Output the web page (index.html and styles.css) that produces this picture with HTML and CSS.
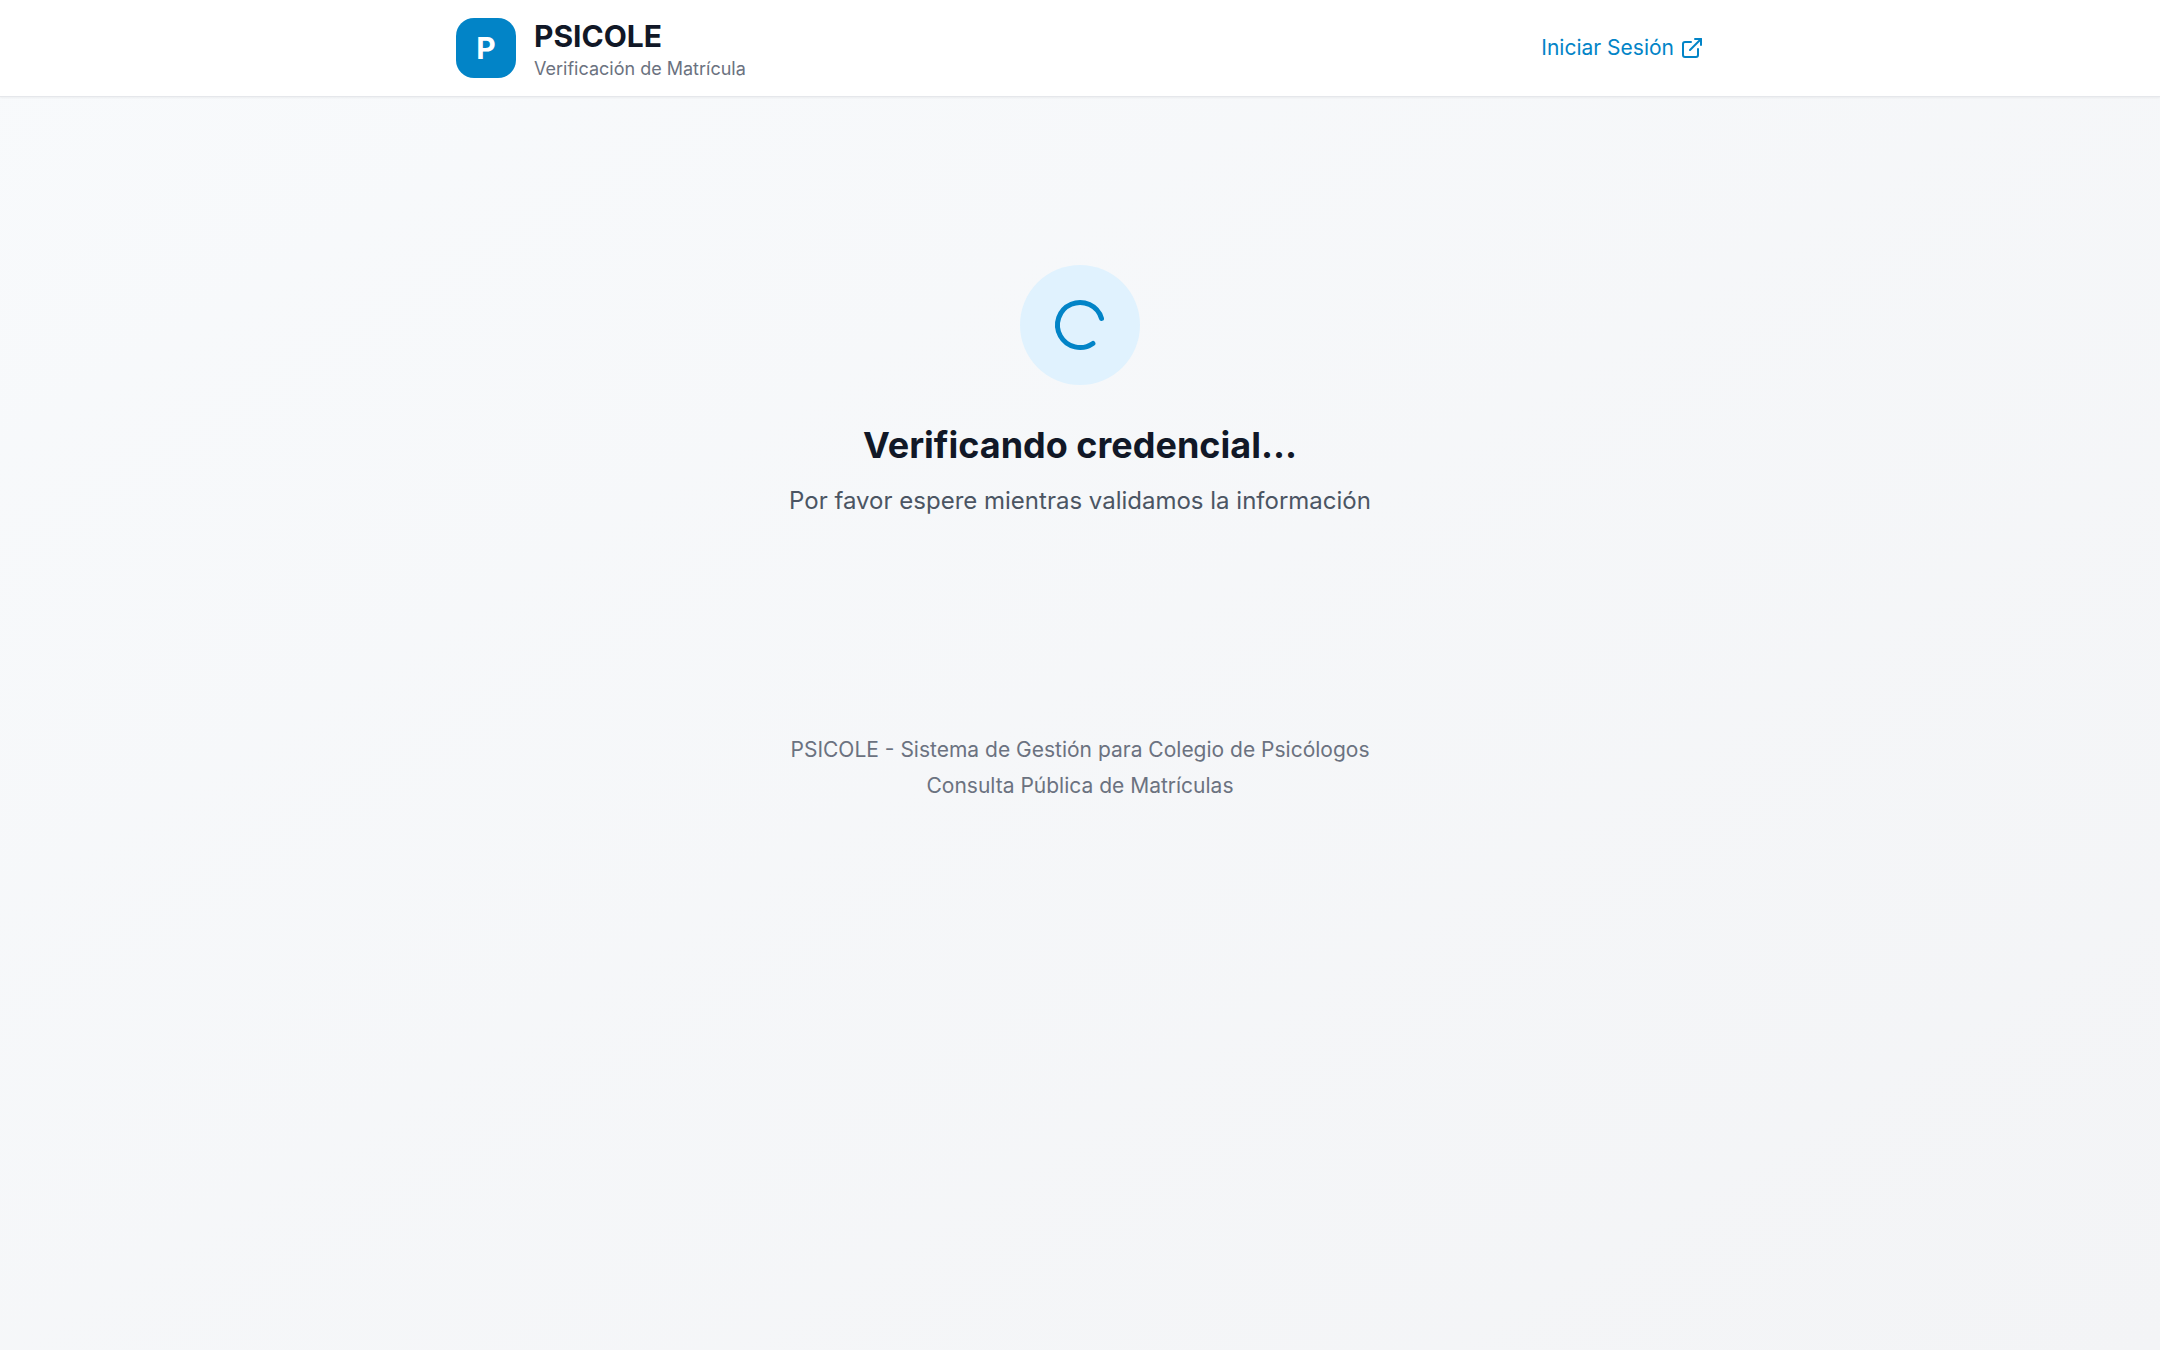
FILE: index.html
```html
<!DOCTYPE html>
<html lang="es">
<head>
  <meta charset="utf-8">
  <meta name="viewport" content="width=device-width, initial-scale=1">
  <title>PSICOLE - Verificación de Matrícula</title>
  <link rel="stylesheet" href="styles.css">
</head>
<body>
  <div class="page">
    <header class="header">
      <div class="container header-row">
        <div class="brand">
          <div class="brand-logo" aria-hidden="true">P</div>
          <div>
            <h1 class="brand-name">PSICOLE</h1>
            <p class="brand-tagline">Verificación de Matrícula</p>
          </div>
        </div>
        <a class="login-link" href="/login">
          Iniciar Sesión
          <svg class="login-icon" viewBox="0 0 24 24" aria-hidden="true">
            <path d="M18 13v6a2 2 0 0 1-2 2H5a2 2 0 0 1-2-2V8a2 2 0 0 1 2-2h6"/>
            <path d="M15 3h6v6"/>
            <path d="M10 14 21 3"/>
          </svg>
        </a>
      </div>
    </header>

    <main class="container main">
      <section class="status" role="status">
        <div class="status-badge">
          <svg class="spinner" viewBox="0 0 24 24" aria-hidden="true">
            <path d="M21 12a9 9 0 1 1-6.219-8.56" transform="rotate(55 12 12)"/>
          </svg>
        </div>
        <h2 class="status-title">Verificando credencial...</h2>
        <p class="status-text">Por favor espere mientras validamos la información</p>
      </section>
    </main>

    <footer class="container footer">
      <p>PSICOLE - Sistema de Gestión para Colegio de Psicólogos</p>
      <p>Consulta Pública de Matrículas</p>
    </footer>
  </div>
</body>
</html>
```

FILE: styles.css
```css
*,
*::before,
*::after {
  box-sizing: border-box;
}

body,
h1,
h2,
p {
  margin: 0;
}

body {
  font-family: Inter, "Liberation Sans", sans-serif;
  color: #111827;
}

.page {
  min-height: 100vh;
  background: linear-gradient(to bottom right, #f8fafc, #f3f4f6);
}

.container {
  width: 100%;
  max-width: 1344px;
  margin: 0 auto;
  padding: 0 48px;
}

.header {
  background: #ffffff;
  border-bottom: 1px solid #e5e7eb;
  box-shadow: 0 1px 2px rgba(0, 0, 0, 0.05);
}

.header-row {
  display: flex;
  align-items: center;
  justify-content: space-between;
  padding-top: 15px;
  padding-bottom: 15px;
}

.brand {
  display: flex;
  align-items: center;
  gap: 18px;
}

.brand-logo {
  display: flex;
  align-items: center;
  justify-content: center;
  width: 60px;
  height: 60px;
  border-radius: 18px;
  background: #0284c7;
  color: #ffffff;
  font-size: 30px;
  font-weight: 700;
}

.brand-name {
  font-size: 30px;
  line-height: 42px;
  font-weight: 700;
}

.brand-tagline {
  font-size: 18px;
  line-height: 24px;
  color: #6b7280;
}

.login-link {
  display: flex;
  align-items: center;
  gap: 6px;
  font-size: 21px;
  line-height: 30px;
  color: #0284c7;
  text-decoration: none;
}

.login-icon,
.spinner {
  fill: none;
  stroke: #0284c7;
  stroke-width: 2;
  stroke-linecap: round;
  stroke-linejoin: round;
}

.login-icon {
  width: 24px;
  height: 24px;
}

.main {
  padding-top: 48px;
  padding-bottom: 48px;
}

.status {
  display: flex;
  flex-direction: column;
  align-items: center;
  padding: 120px 0;
  text-align: center;
}

.status-badge {
  display: flex;
  align-items: center;
  justify-content: center;
  width: 120px;
  height: 120px;
  margin-bottom: 36px;
  border-radius: 50%;
  background: #e0f2fe;
}

.spinner {
  width: 60px;
  height: 60px;
}

.status-title {
  margin-bottom: 14px;
  font-size: 36px;
  line-height: 48px;
  font-weight: 700;
}

.status-text {
  font-size: 24px;
  line-height: 36px;
  color: #4b5563;
}

.footer {
  display: flex;
  flex-direction: column;
  gap: 6px;
  padding-top: 48px;
  padding-bottom: 48px;
  font-size: 21px;
  line-height: 30px;
  color: #6b7280;
  text-align: center;
}
```
